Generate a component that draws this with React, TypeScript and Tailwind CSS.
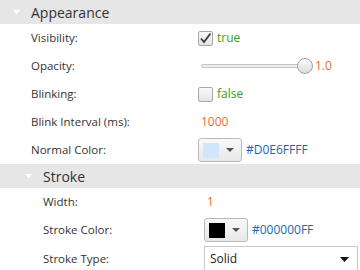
import { useState } from 'react'

function Caret({ className }: { className: string }) {
  return (
    <svg width="7" height="5" viewBox="0 0 7 5" className={className}>
      <path d="M0 0 L7 0 L3.5 4.5 Z" fill="#ffffff" />
    </svg>
  )
}

function Header({ title, indent }: { title: string; indent: boolean }) {
  return (
    <div className="flex h-[24px] items-center bg-[#e6e6e6]">
      <div className={indent ? 'w-[25px] shrink-0' : 'w-[13px] shrink-0'} />
      <Caret className="shrink-0" />
      <span className="ml-[11px] text-[14px] text-[#333]">{title}</span>
    </div>
  )
}

function Row({ label, indent, children }: { label: string; indent: boolean; children: React.ReactNode }) {
  return (
    <div className="flex h-[28px] items-center">
      <div className={indent ? 'w-[204px] shrink-0 pl-[43px] text-[11.5px] text-[#333]' : 'w-[198px] shrink-0 pl-[31px] text-[11.5px] text-[#333]'}>
        {label}
      </div>
      <div className="flex flex-1 items-center">{children}</div>
    </div>
  )
}

function Check({ checked, onToggle }: { checked: boolean; onToggle: () => void }) {
  return (
    <button
      onClick={onToggle}
      className="flex h-[15px] w-[15px] items-center justify-center rounded-[2px] border border-[#a8a8a8] bg-gradient-to-b from-[#fafafa] to-[#e4e4e4]"
    >
      {checked && (
        <svg width="13" height="13" viewBox="0 0 13 13">
          <path d="M2 6.5 L5 10 L11.5 1.5" stroke="#3a3a3a" strokeWidth="1.8" fill="none" />
        </svg>
      )}
    </button>
  )
}

function ColorButton({ color }: { color: string }) {
  return (
    <div className="flex h-[24px] w-[44px] items-center rounded-[3px] border border-[#b9b9b9] bg-gradient-to-b from-[#f9f9f9] to-[#e8e8e8] pl-[4px]">
      <div className="h-[15px] w-[16px]" style={{ backgroundColor: color }} />
      <svg width="8" height="5" viewBox="0 0 8 5" className="ml-[7px]">
        <path d="M0 0 L8 0 L4 4 Z" fill="#555" />
      </svg>
    </div>
  )
}

export default function App() {
  const [visible, setVisible] = useState(true)
  const [blinking, setBlinking] = useState(false)

  return (
    <div className="h-[270px] w-[360px] overflow-hidden bg-white" style={{ fontFamily: '"Open Sans", sans-serif' }}>
      <Header title="Appearance" indent={false} />
      <Row label="Visibility:" indent={false}>
        <Check checked={visible} onToggle={() => setVisible(!visible)} />
        <span className="ml-[4px] text-[12px] text-[#3c9a1c]">{visible ? 'true' : 'false'}</span>
      </Row>
      <Row label="Opacity:" indent={false}>
        <div className="relative ml-[3px] flex h-[16px] w-[112px] items-center">
          <div className="h-[4px] w-full rounded-full border border-[#c4c4c4] bg-[#eeeeee]" />
          <div className="absolute right-0 h-[16px] w-[16px] rounded-full border border-[#a0a0a0] bg-gradient-to-b from-[#fdfdfd] to-[#dcdcdc]" />
        </div>
        <span className="ml-[2px] text-[12px] text-[#e0703c]">1.0</span>
      </Row>
      <Row label="Blinking:" indent={false}>
        <Check checked={blinking} onToggle={() => setBlinking(!blinking)} />
        <span className="ml-[4px] text-[12px] text-[#3c9a1c]">{blinking ? 'true' : 'false'}</span>
      </Row>
      <Row label="Blink Interval (ms):" indent={false}>
        <span className="ml-[3px] text-[12px] text-[#e0703c]">1000</span>
      </Row>
      <Row label="Normal Color:" indent={false}>
        <ColorButton color="#D0E6FF" />
        <span className="ml-[4px] text-[12px] text-[#2266b0]">#D0E6FFFF</span>
      </Row>
      <Header title="Stroke" indent={true} />
      <Row label="Width:" indent={true}>
        <span className="ml-[3px] text-[12px] text-[#e0703c]">1</span>
      </Row>
      <Row label="Stroke Color:" indent={true}>
        <ColorButton color="#000000" />
        <span className="ml-[4px] text-[12px] text-[#2266b0]">#000000FF</span>
      </Row>
      <div className="flex h-[28px] items-start">
        <div className="w-[204px] shrink-0 pl-[43px] pt-[6px] text-[11.5px] text-[#333]">Stroke Type:</div>
        <div className="mt-[2px] flex h-[26px] w-[154px] items-center justify-between border border-[#c8c8c8] bg-white pl-[5px] pr-[8px] text-[12px] text-[#222]">
          <span>Solid</span>
          <svg width="9" height="5" viewBox="0 0 9 5">
            <path d="M0 0 L9 0 L4.5 5 Z" fill="#111" />
          </svg>
        </div>
      </div>
    </div>
  )
}
